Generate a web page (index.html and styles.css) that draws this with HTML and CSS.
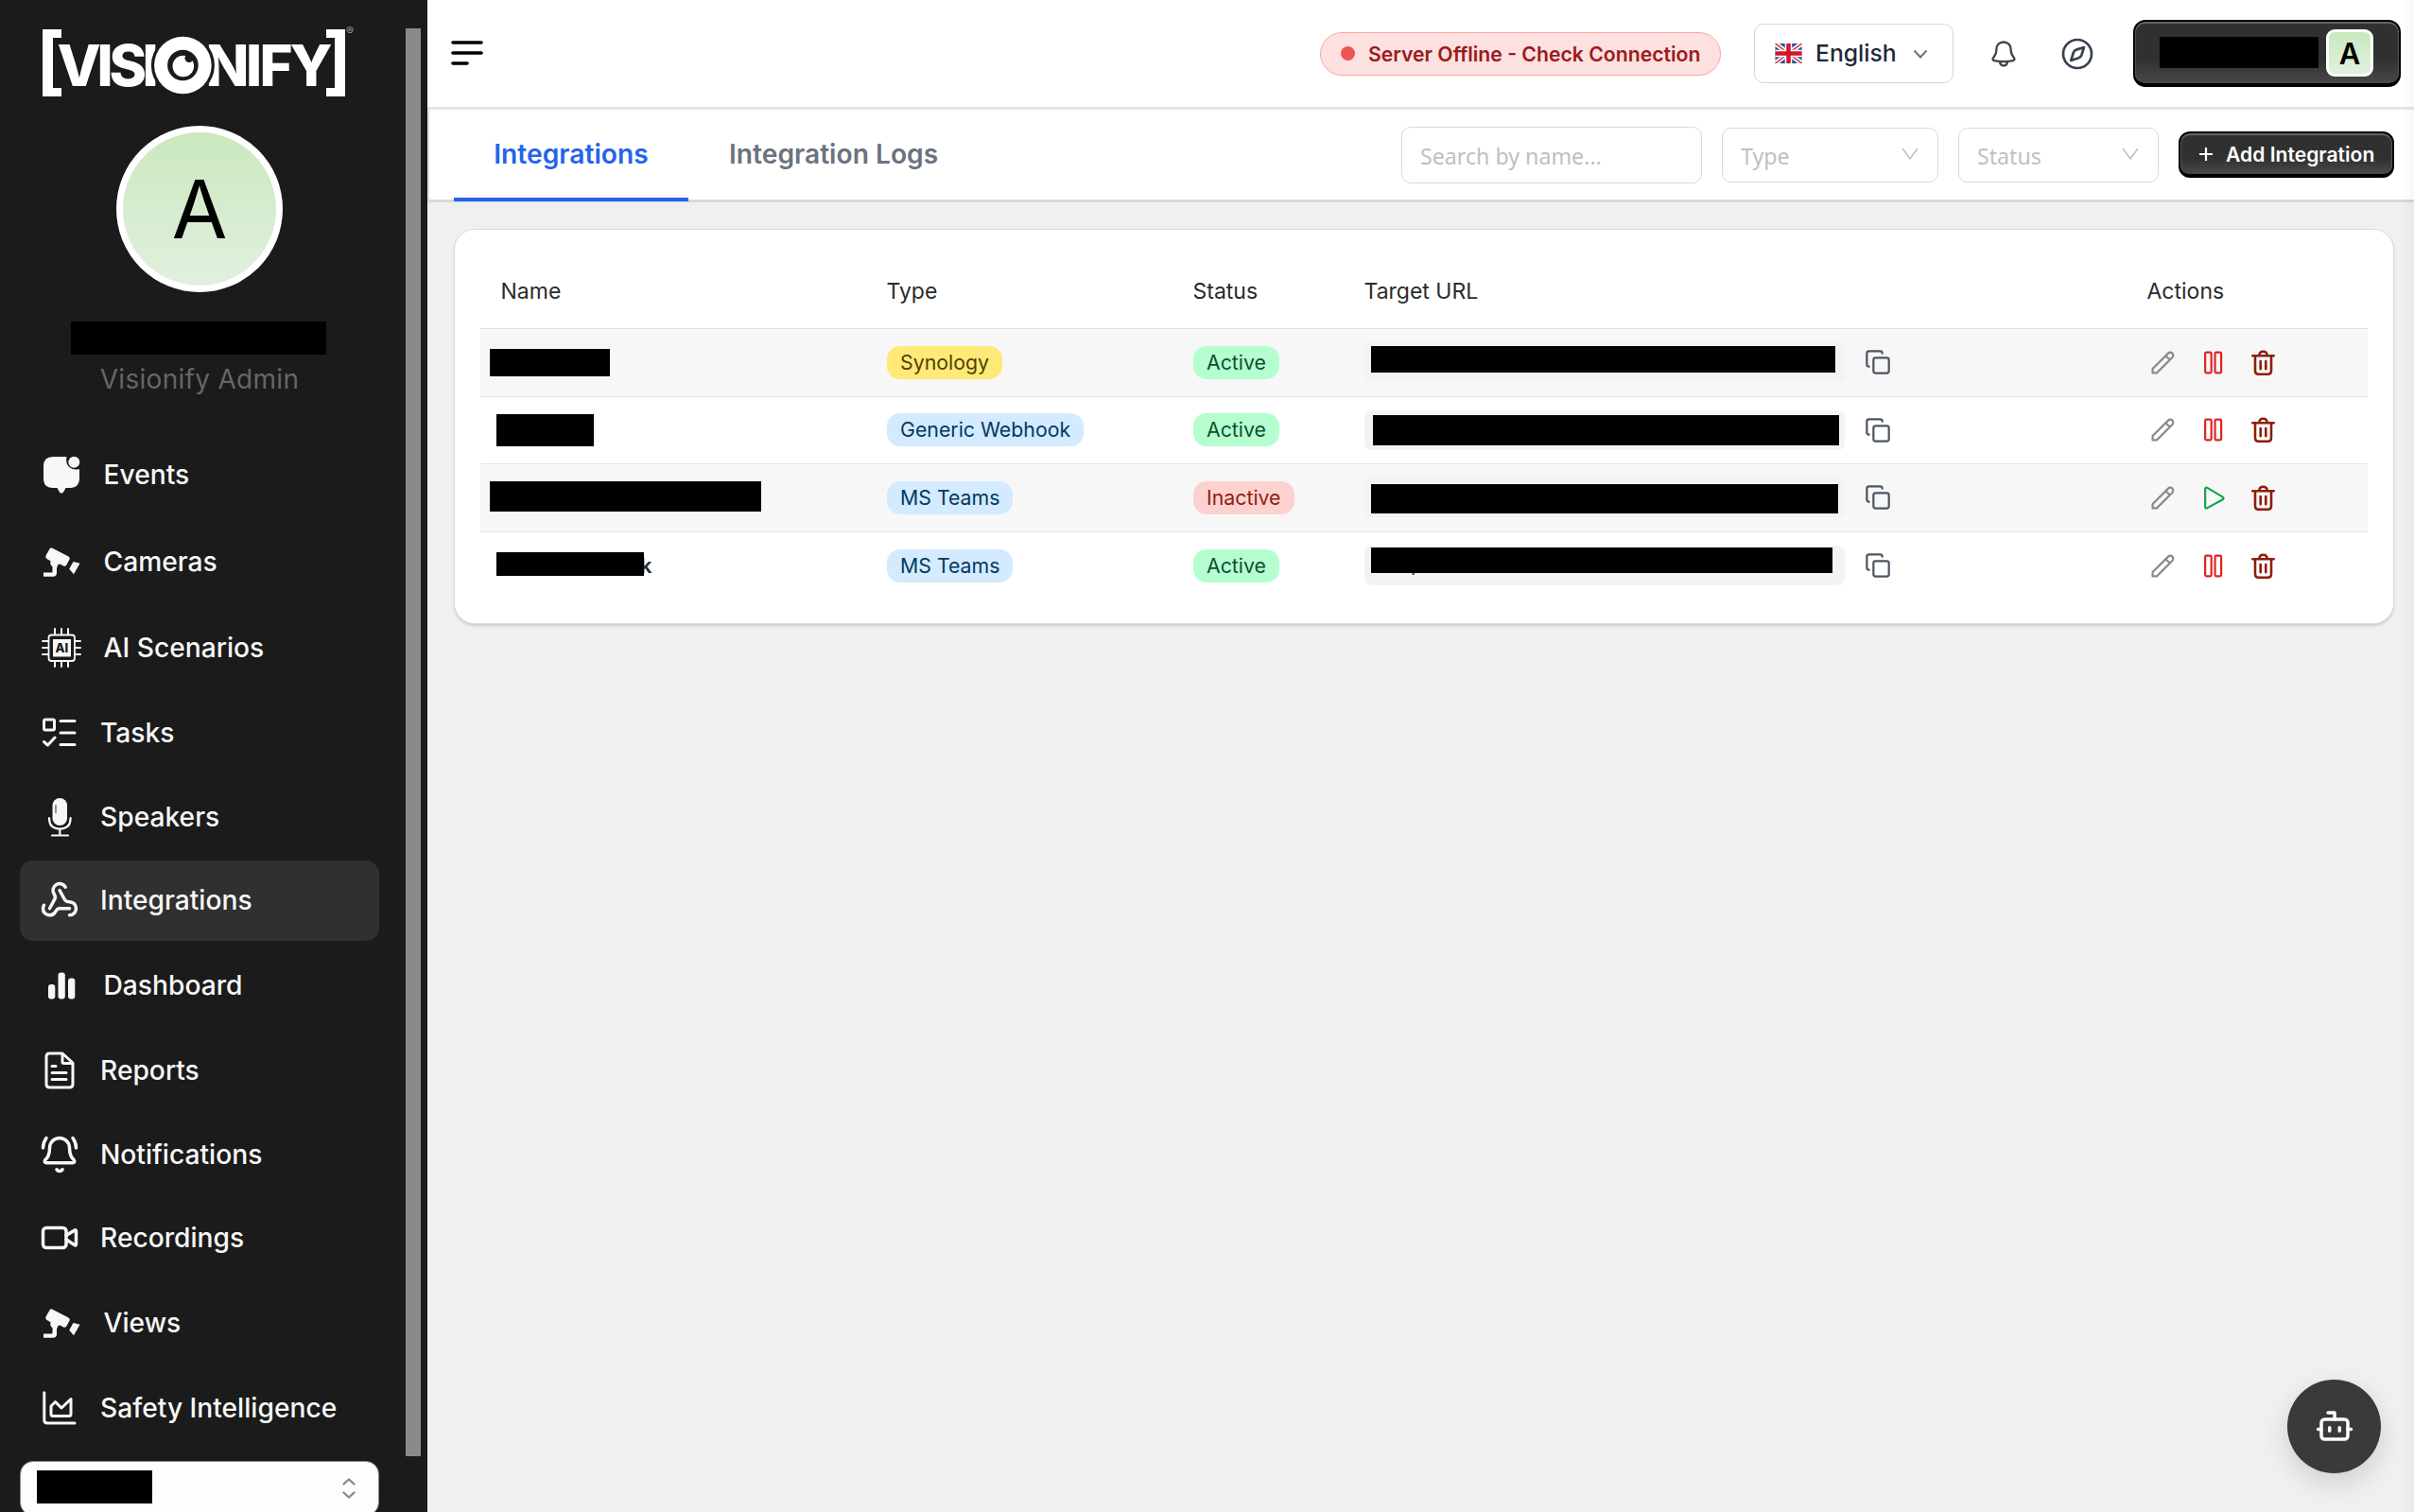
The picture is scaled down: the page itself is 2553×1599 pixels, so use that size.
FILE: index.html
```html
<!DOCTYPE html>
<html lang="en">
<head>
    <meta charset="UTF-8">
    <title>Visionify - Integrations</title>
    <link rel="stylesheet" href="styles.css">
</head>
<body>
    <!-- shared icons -->
    <svg class="sprite">
        <symbol id="cctv" viewBox="0 0 40 40">
            <path d="M10 5.5 27.5 14.5q2 1.2 1 3.3l-3.2 5.6q-1.200 2-3.300 1l-3-1.600h-2.500q-1 3-1.500 4v5q0 4-4 4H1v-4.200h8.500q1 0 1-1v-5.300q-3.200-2.500-2-6l-4-2.400q-2-1.500-1-3.500l3-5.200Q8 4.500 10 5.500Z"/>
            <path d="m32.500 20 7 1.800-6.500 11.500-4.800-5.500Z"/>
        </symbol>
        <symbol id="copy" viewBox="0 0 24 24">
            <rect x="8" y="8" width="14" height="14" rx="2"/>
            <path d="M4 16c-1.100 0-2-.9-2-2V4c0-1.100.9-2 2-2h10c1.100 0 2 .9 2 2"/>
        </symbol>
        <symbol id="pencil" viewBox="0 0 24 24">
            <path d="M1.500 22.500v-4.200L17.300 2.500a2.900 2.900 0 0 1 4.200 4.200L5.700 22.500ZM14.800 5l4.200 4.200"/>
        </symbol>
        <symbol id="pause" viewBox="0 0 24 24">
            <rect x="3" y="1.500" width="6.300" height="21" rx="1.300"/>
            <rect x="13" y="1.500" width="6.300" height="21" rx="1.300"/>
        </symbol>
        <symbol id="play" viewBox="0 0 24 24">
            <path d="M3 3.200v17.600q0 2.300 2.200 1.400l15.300-8.300q2.300-1.500 0-3L5.200 1.800Q3 1 3 3.200Z"/>
        </symbol>
        <symbol id="trash" viewBox="0 0 24 26">
            <path d="M1.200 6h21.600M3.800 6v15q0 3.800 3.400 3.800h9.600q3.400 0 3.400-3.800V6M8 6q0-4.300 4-4.300T16 6M9.300 11.500v8M14.700 11.500v8"/>
        </symbol>
    </svg>

    <div class="layout">
        <aside class="sidebar">
            <svg class="logo" viewBox="45 25 335 80">
                <path d="M45 31h20v9H56v53h9v9H45Zm320 0h-20v9h9v53h-9v9h20Z"/>
                <g class="logo-text">
                    <text x="60.500 102.500 115.500 150.500" y="91">VISI</text>
                    <text x="217.500 260 274.500 306.500" y="91">NIFY</text>
                </g>
                <circle class="dark" cx="193.400" cy="69" r="33.500"/>
                <circle cx="193.400" cy="69" r="30.300"/>
                <circle class="dark" cx="193.400" cy="69" r="16.300"/>
                <circle cx="193.800" cy="70" r="11.300"/>
                <circle class="dark" cx="200" cy="61.500" r="4.500"/>
                <text class="logo-mark" x="366" y="37">®</text>
            </svg>
            <div class="avatar">A</div>
            <div class="user-name"></div>
            <p class="role">Visionify Admin</p>

            <nav class="menu">
                <a class="item big"><svg viewBox="0 0 40 40"><path d="M11 1h14.500q-1.500 8 3.500 11.500 4 3 10 1.500v10q0 9-9 10h-5.500l-2 3.800q-2.500 3.800-5 0l-2-3.800H11Q1 34 1 24V11Q1 1 11 1Z"/><circle cx="33.300" cy="6.700" r="6"/></svg><span>Events</span></a>
                <a class="item big"><svg><use href="#cctv"/></svg><span>Cameras</span></a>
                <a class="item big"><svg viewBox="0 0 40 40"><path class="line" stroke-width="2" d="M13 0v6M20 0v6M27 0v6M13 34v6M20 34v6M27 34v6M0 13h6M0 20h6M0 27h6M34 13h6M34 20h6M34 27h6"/><rect class="line" stroke-width="1.800" x="6.500" y="6.500" width="27.500" height="27.500" rx="3"/><rect x="11" y="11" width="19" height="18.500"/><text class="chip" x="13.500" y="25">AI</text></svg><span>AI Scenarios</span></a>
                <a class="item"><svg class="line" viewBox="0 0 36 36"><rect x="1.500" y="4" width="11" height="11" rx="1.500"/><path d="M19 5.500h15M19 18h15M19 30.500h15M1.500 27.500l4 3.500 7.500-8"/></svg><span>Tasks</span></a>
                <a class="item"><svg class="mic" viewBox="0 0 36 42"><rect x="10.500" y="1" width="15.500" height="29" rx="7.700"/><path class="line" stroke-width="2.200" d="M7 22q0 11.500 11.300 11.500T29.600 22M18.300 34v6M10 40.500h17"/><path class="shine" d="M14 8v9"/></svg><span>Speakers</span></a>
                <a class="item active"><svg class="line hook" viewBox="0 0 24 24"><path d="M18 16.980h-5.990c-1.100 0-1.950.940-2.480 1.900A4 4 0 0 1 2 17c.010-.700.200-1.400.570-2"/><path d="m6 17 3.130-5.780c.530-.970.100-2.180-.500-3.100a4 4 0 1 1 6.890-4.060"/><path d="m12 6 3.130 5.730C15.660 12.700 16.900 13 18 13a4 4 0 0 1 0 8"/></svg><span>Integrations</span></a>
                <a class="item big"><svg viewBox="0 0 40 40"><rect x="6" y="19" width="7.300" height="15.500" rx="3"/><rect x="16.500" y="6.500" width="7.300" height="28" rx="3"/><rect x="27" y="12.500" width="7.300" height="22" rx="3"/></svg><span>Dashboard</span></a>
                <a class="item"><svg class="line doc" viewBox="0 0 36 40"><path d="M21 2H7.500Q4 2 4 5.500v29Q4 38 7.500 38h21q3.500 0 3.500-3.500V12ZM21 2.500V11q0 1.500 1.500 1.500H32M10 15.500h4M10 22.500h15M10 29.500h15"/></svg><span>Reports</span></a>
                <a class="item"><svg class="line hook" viewBox="0 0 24 24"><path d="M10.268 21a2 2 0 0 0 3.464 0M22 8c0-2.300-.8-4.300-2-6M3.262 15.326A1 1 0 0 0 4 17h16a1 1 0 0 0 .740-1.673C19.410 13.956 18 12.499 18 8A6 6 0 0 0 6 8c0 4.499-1.411 5.956-2.738 7.326M4 2C2.800 3.700 2 5.700 2 8"/></svg><span>Notifications</span></a>
                <a class="item"><svg class="line hook" viewBox="0 0 24 24"><path d="m16 13 5.223 3.482a.5.5 0 0 0 .777-.416V7.870a.5.5 0 0 0-.752-.432L16 10.500"/><rect x="2" y="6" width="14" height="12" rx="2"/></svg><span>Recordings</span></a>
                <a class="item big"><svg><use href="#cctv"/></svg><span>Views</span></a>
                <a class="item"><svg class="line" viewBox="0 0 36 36"><path d="M1.800 1.800v29q0 3.200 3.200 3.200h29M9 16l4.500-4.500 6.500 6.500 10-9.500v16q0 2-2 2H11q-2 0-2-2Z"/></svg><span>Safety Intelligence</span></a>
            </nav>

            <div class="site-select">
                <span class="site-name"></span>
                <svg viewBox="0 0 14 24"><path d="m1.500 7.500 5.500-5 5.500 5M1.500 16.500l5.500 5 5.500-5"/></svg>
            </div>
            <div class="scrollbar"></div>
        </aside>

        <main class="main">
            <header class="topbar">
                <svg class="burger" viewBox="0 0 34 28"><path d="M2 3h30M2 14h30M2 25h15"/></svg>
                <div class="server"><i></i>Server Offline - Check Connection</div>
                <div class="lang">
                    <svg class="flag" viewBox="0 0 28 21">
                        <rect width="28" height="21" fill="#1d4f9f"/>
                        <path d="M0 0l28 21M28 0 0 21" stroke="#fff" stroke-width="5"/>
                        <path d="M0 0l28 21M28 0 0 21" stroke="#d22" stroke-width="1.500"/>
                        <path d="M14 0v21M0 10.500h28" stroke="#fff" stroke-width="7.500"/>
                        <path d="M14 0v21M0 10.500h28" stroke="#d3142b" stroke-width="4.500"/>
                    </svg>
                    <span>English</span>
                    <svg class="down" viewBox="0 0 16 10"><path d="m1.500 1.500 6.500 7 6.500-7"/></svg>
                </div>
                <svg class="bell" viewBox="0 0 26 28"><path d="M13 1.500c-4.800 0-7.600 3.400-7.600 8 0 4-.9 5.500-2.700 7.700-2 2.300-1.200 3.800 1.600 4.200q8.700 1.400 17.400 0c2.800-.4 3.600-1.900 1.600-4.200-1.800-2.200-2.700-3.700-2.700-7.700 0-4.600-2.800-8-7.600-8ZM9 22.200q.5 4.300 4 4.300t4-4.300"/></svg>
                <svg class="compass" viewBox="0 0 34 34"><circle cx="17" cy="17" r="15"/><path d="M24 10l-8.200 2.600q-2.300.8-3 3L10.200 24l8.200-2.800q2.200-.8 3-3Z"/></svg>
                <div class="account"><span class="account-name"></span><b>A</b></div>
            </header>

            <div class="tabs">
                <a class="tab current">Integrations</a>
                <a class="tab">Integration Logs</a>
                <div class="filters">
                    <div class="field search">Search by name...</div>
                    <div class="field type">Type<svg viewBox="0 0 18 14"><path d="m1 1 8 11 8-11"/></svg></div>
                    <div class="field status">Status<svg viewBox="0 0 18 14"><path d="m1 1 8 11 8-11"/></svg></div>
                    <button class="add"><svg viewBox="0 0 16 16"><path d="M8 1v14M1 8h14"/></svg>Add Integration</button>
                </div>
            </div>

            <section class="card">
                <table>
                    <colgroup><col class="c1"><col class="c2"><col class="c3"><col class="c4"><col></colgroup>
                    <thead>
                        <tr><th>Name</th><th>Type</th><th>Status</th><th>Target URL</th><th>Actions</th></tr>
                    </thead>
                    <tbody>
                        <tr>
                            <td><span class="mask n1"></span></td>
                            <td><span class="tag yellow">Synology</span></td>
                            <td><span class="tag green">Active</span></td>
                            <td><div class="target"><code><span class="mask u1"></span></code><svg><use href="#copy"/></svg></div></td>
                            <td><div class="actions"><svg class="edit"><use href="#pencil"/></svg><svg class="stop"><use href="#pause"/></svg><svg class="del"><use href="#trash"/></svg></div></td>
                        </tr>
                        <tr>
                            <td><span class="mask n2"></span></td>
                            <td><span class="tag blue">Generic Webhook</span></td>
                            <td><span class="tag green">Active</span></td>
                            <td><div class="target"><code><span class="mask u2"></span></code><svg><use href="#copy"/></svg></div></td>
                            <td><div class="actions"><svg class="edit"><use href="#pencil"/></svg><svg class="stop"><use href="#pause"/></svg><svg class="del"><use href="#trash"/></svg></div></td>
                        </tr>
                        <tr>
                            <td><span class="mask n3"></span></td>
                            <td><span class="tag blue">MS Teams</span></td>
                            <td><span class="tag red">Inactive</span></td>
                            <td><div class="target"><code><span class="mask u3"></span></code><svg><use href="#copy"/></svg></div></td>
                            <td><div class="actions"><svg class="edit"><use href="#pencil"/></svg><svg class="start"><use href="#play"/></svg><svg class="del"><use href="#trash"/></svg></div></td>
                        </tr>
                        <tr>
                            <td><span class="mask n4"></span><span class="tail">k</span></td>
                            <td><span class="tag blue">MS Teams</span></td>
                            <td><span class="tag green">Active</span></td>
                            <td><div class="target"><code>https://<span class="mask u4"></span></code><svg><use href="#copy"/></svg></div></td>
                            <td><div class="actions"><svg class="edit"><use href="#pencil"/></svg><svg class="stop"><use href="#pause"/></svg><svg class="del"><use href="#trash"/></svg></div></td>
                        </tr>
                    </tbody>
                </table>
            </section>
        </main>
    </div>

    <button class="bot">
        <svg viewBox="0 0 24 24"><path d="M12 8V4H8M2 14h2M20 14h2M15 13v2M9 13v2"/><rect x="4" y="8" width="16" height="12" rx="2"/></svg>
    </button>
</body>
</html>
```
FILE: styles.css
```css
* {
    box-sizing: border-box;
}
body {
    margin: 0;
    font-family: Inter, "Liberation Sans", sans-serif;
    background: #f0f0f0;
    color: #2b2b2b;
    overflow: hidden;
}
/* soft shade along the right window edge */
body::after {
    content: "";
    position: fixed;
    top: 0;
    right: 0;
    bottom: 0;
    width: 12px;
    background: linear-gradient(to right, rgba(0, 0, 0, 0), rgba(0, 0, 0, 0.03));
    pointer-events: none;
}
.sprite {
    display: none;
}
.layout {
    display: flex;
    height: 100vh;
}

/* sidebar */
.sidebar {
    position: relative;
    flex: 0 0 452px;
    padding: 25px 51px 0 21px;
    background: #1b1b1b;
    overflow: hidden;
}
.logo {
    display: block;
    width: 335px;
    height: 80px;
    margin-left: 24px;
    fill: #fff;
    overflow: visible;
}
.logo .dark {
    fill: #1b1b1b;
}
.logo-text {
    font-size: 60px;
    font-weight: 800;
}
.logo-mark {
    font-size: 12px;
    fill: #999;
}
.avatar {
    display: flex;
    align-items: center;
    justify-content: center;
    width: 176px;
    height: 176px;
    margin: 28px auto 0;
    border: 7px solid #fff;
    border-radius: 50%;
    background: linear-gradient(#cae8be, #e2f0df);
    color: #000;
    font-size: 85px;
}
.user-name {
    width: 270px;
    height: 35px;
    margin: 31px 0 0 54px;
    background: #000;
}
.role {
    margin: 7px 0 38px;
    line-height: 38px;
    text-align: center;
    font-size: 28px;
    letter-spacing: 0.3px;
    color: #666;
}
.menu {
    display: flex;
    flex-direction: column;
    gap: 3.5px;
}
.item {
    display: flex;
    align-items: center;
    gap: 25px;
    height: 85px;
    padding-left: 24px;
    border-radius: 14px;
    color: #f7f7f7;
    font-size: 28.2px;
    font-weight: 500;
    white-space: nowrap;
}
.item.big {
    gap: 24.5px;
    height: 88px;
}
.item svg {
    width: 36px;
    height: 36px;
    fill: #f7f7f7;
    overflow: visible;
}
.item.big svg {
    width: 40px;
    height: 40px;
}
.item .mic {
    height: 42px;
}
.item .doc {
    height: 40px;
}
.item .hook {
    width: 42px;
    height: 42px;
    margin: 0 -3px;
}
.item .line {
    fill: none;
    stroke: #f7f7f7;
    stroke-linecap: round;
    stroke-linejoin: round;
}
.item svg.line {
    stroke-width: 3;
}
.item svg.hook {
    stroke-width: 2;
}
.shine {
    stroke: #555;
    stroke-width: 1.2;
}
.chip {
    fill: #1b1b1b;
    font-size: 13px;
    font-weight: 800;
}
.item.active {
    background: #303030;
}
.site-select {
    position: absolute;
    left: 21px;
    top: 1545px;
    display: flex;
    align-items: center;
    justify-content: space-between;
    width: 380px;
    height: 58px;
    padding: 0 24px 0 17px;
    border: 1px solid #8a8a8a;
    border-radius: 14px;
    background: #fdfdfd;
}
.site-name {
    width: 122px;
    height: 35px;
    margin-top: -3px;
    background: #000;
}
.site-select svg {
    width: 14px;
    height: 24px;
    fill: none;
    stroke: #888;
    stroke-width: 2.3;
    stroke-linecap: round;
}
.scrollbar {
    position: absolute;
    top: 30px;
    right: 7px;
    width: 16px;
    height: 1510px;
    background: #8a8a8a;
}

/* top bar */
.main {
    flex: 1;
    min-width: 0;
}
.topbar {
    display: flex;
    align-items: center;
    height: 116px;
    padding: 0 14px 0 24px;
    border-bottom: 3px solid #e6e6e6;
    background: #fff;
}
.burger {
    width: 36px;
    height: 28px;
    margin: -1px auto 0 0;
    fill: none;
    stroke: #000;
    stroke-width: 3.6;
    stroke-linecap: round;
}
.server {
    display: flex;
    align-items: center;
    gap: 14px;
    width: 424px;
    height: 46px;
    padding-left: 21px;
    border: 1px solid #fca5a5;
    border-radius: 23px;
    background: #fde0e0;
    color: #991b1b;
    font-size: 21.2px;
    font-weight: 600;
    line-height: 42px;
    white-space: nowrap;
}
.server i {
    width: 15px;
    height: 15px;
    border-radius: 50%;
    background: #f05555;
}
.lang {
    display: flex;
    align-items: center;
    width: 211px;
    height: 63px;
    margin-left: 35px;
    padding-left: 21px;
    border: 1px solid #d1d5db;
    border-radius: 10px;
    color: #1f2937;
    font-size: 24.7px;
    font-weight: 500;
}
.lang span {
    flex: none;
    width: 117px;
    padding: 0 0 1px 14px;
}
.flag {
    flex: none;
    width: 29px;
    height: 21px;
}
.down {
    flex: none;
    width: 16px;
    height: 10px;
    fill: none;
    stroke: #6b7280;
    stroke-width: 2;
}
.bell {
    width: 26px;
    height: 28px;
    margin-left: 40px;
    fill: none;
    stroke: #444;
    stroke-width: 2.4;
}
.compass {
    width: 34px;
    height: 34px;
    margin-left: 48px;
    fill: none;
    stroke: #374151;
    stroke-width: 2.7;
    stroke-linejoin: round;
}
.account,
.add {
    background: linear-gradient(#303030 60%, #484848);
    border: 2px solid #000;
    border-bottom-width: 4px;
    box-shadow: inset 0 2px 1px #666, inset 1px 0 1px #555, inset -1px 0 1px #555;
}
.account {
    display: flex;
    align-items: center;
    justify-content: space-between;
    width: 283px;
    height: 71px;
    margin-left: 42px;
    padding: 0 27px 0 26px;
    border-radius: 13px;
}
.account-name {
    width: 168px;
    height: 33px;
    background: #000;
}
.account b {
    width: 50px;
    height: 50px;
    border: 3px solid #fff;
    border-radius: 9px;
    background: linear-gradient(#cae8be, #e2f0df);
    color: #000;
    font-size: 31px;
    font-weight: 600;
    line-height: 45px;
    text-align: center;
}

/* tabs and filters */
.tabs {
    display: flex;
    height: 98px;
    padding: 0 21px 0 26px;
    border-left: 2px solid #e2e2e2;
    border-bottom: 3px solid #d8d8d8;
    background: #fff;
}
.tab {
    height: 97px;
    padding: 0 43px;
    border-bottom: 4px solid transparent;
    color: #6b7280;
    font-size: 28.2px;
    font-weight: 600;
    line-height: 94px;
    white-space: nowrap;
}
.tab.current {
    width: 248px;
    padding: 0;
    text-align: center;
    border-bottom-color: #2563eb;
    color: #2563eb;
}
.filters {
    display: flex;
    align-items: center;
    gap: 21px;
    margin-left: auto;
}
.field {
    display: flex;
    align-items: center;
    justify-content: space-between;
    height: 58px;
    padding: 2px 20px 0 19px;
    border: 1px solid #d9d9d9;
    border-radius: 10px;
    color: #bfbfbf;
    font-family: "Noto Sans", sans-serif;
    font-size: 23.2px;
}
.field svg {
    width: 18px;
    height: 14px;
    margin-top: -4px;
    fill: none;
    stroke: #bfbfbf;
    stroke-width: 1.5;
}
.search {
    width: 318px;
    height: 60px;
    padding-top: 2px;
}
.type {
    width: 229px;
}
.status {
    width: 212px;
}
.add {
    display: flex;
    align-items: center;
    gap: 13px;
    width: 228px;
    height: 49px;
    padding: 1px 0 0 19px;
    border-radius: 12px;
    color: #fff;
    font-family: inherit;
    font-size: 21.1px;
    font-weight: 600;
    white-space: nowrap;
}
.add svg {
    width: 16px;
    height: 16px;
    flex: none;
    stroke: #fff;
    stroke-width: 2.2;
}

/* table */
.card {
    height: 418px;
    margin: 28px 21px 0 28px;
    padding: 27px 27px 0;
    border: 1px solid #dcdcdc;
    border-radius: 22px;
    background: #fff;
    box-shadow: 0 2px 3px rgba(0, 0, 0, 0.15);
}
table {
    width: 100%;
    table-layout: fixed;
    border-spacing: 0;
}
.c1 { width: 408px; }
.c2 { width: 324px; }
.c3 { width: 181px; }
.c4 { width: 828px; }
th {
    height: 78px;
    padding: 0 0 2px 21.5px;
    border-bottom: 1px solid #e0e0e0;
    text-align: left;
    font-size: 23px;
    font-weight: 400;
}
td {
    position: relative;
    height: 71.5px;
    padding: 0 0 0 22px;
    border-bottom: 1px solid #e6e6e6;
}
tbody tr:nth-child(odd) {
    background: #f7f7f7;
}
tbody tr:last-child td {
    border-bottom: 0;
}
.mask {
    position: absolute;
    background: #000;
}
.n1 { left: 10px; top: 21px; width: 127px; height: 29px; }
.n2 { left: 17px; top: 18px; width: 103px; height: 34px; }
.n3 { left: 10px; top: 18px; width: 287px; height: 32px; }
.n4 { left: 17px; top: 21px; width: 156px; height: 25px; }
.tail {
    margin-left: 147px;
    font-size: 22px;
    font-weight: 600;
}
.n4 {
    z-index: 1;
}
.tag {
    display: inline-block;
    height: 35px;
    padding: 0 14px;
    border-radius: 14px;
    font-size: 21.3px;
    line-height: 35px;
    vertical-align: middle;
}
.yellow { background: #ffe977; color: #4d4200; }
.blue { background: #d3eaff; color: #003a61; }
.green { background: #b4fed0; color: #0c5132; }
.red { background: #fed1d1; color: #8e1f0b; }
.target {
    display: flex;
    align-items: center;
    gap: 21px;
}
.target code {
    position: relative;
    width: 508px;
    height: 42px;
    padding-left: 11px;
    border-radius: 7px;
    background: #f2f3f5;
    color: #1f2937;
    font-family: "Liberation Mono", monospace;
    font-size: 21px;
    line-height: 44px;
}
.target svg {
    width: 28px;
    height: 28px;
    fill: none;
    stroke: #4b5563;
    stroke-width: 1.9;
    stroke-linecap: round;
}
.u1 { left: 7px; top: 4px; width: 491px; height: 28px; }
.u2 { left: 9px; top: 5px; width: 493px; height: 32px; }
.u3 { left: 7px; top: 7px; width: 494px; height: 31px; }
.u4 { left: 7px; top: 2px; width: 488px; height: 27px; }
.actions {
    display: flex;
    align-items: center;
    gap: 28.5px;
    padding-left: 4px;
}
.actions svg {
    width: 25px;
    height: 25px;
    fill: none;
    stroke-width: 2.1;
    stroke-linejoin: round;
    stroke-linecap: round;
}
.actions .del {
    height: 27px;
    margin-left: -1px;
    stroke: #8e1f0b;
    stroke-width: 2.5;
}
.edit { stroke: #8a8a8a; }
.stop { stroke: #e02424; }
.start { stroke: #16a34a; }

.bot {
    position: fixed;
    right: 35px;
    bottom: 41px;
    width: 99px;
    height: 99px;
    padding: 2px 0 0;
    border: 0;
    border-radius: 50%;
    background: #3a3a3a;
    box-shadow: 0 10px 28px rgba(0, 0, 0, 0.14);
}
.bot svg {
    width: 42px;
    height: 42px;
    fill: none;
    stroke: #fff;
    stroke-width: 2;
    stroke-linecap: round;
    stroke-linejoin: round;
}
```
